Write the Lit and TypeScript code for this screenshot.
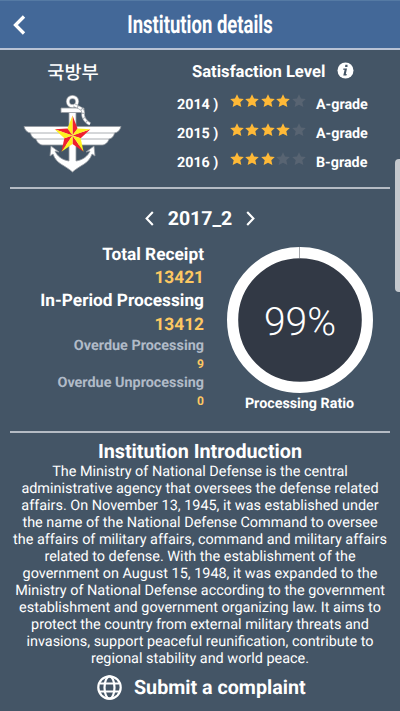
import { LitElement, html, svg, css } from "lit";
import { customElement, property } from "lit/decorators.js";

const STAR = "M8 .3l2.3 4.9 5.500.600-4 3.700 1.200 5.400L8 12.200l-5 2.700 1.200-5.400-4-3.700 5.500-.600z";

@customElement("star-rating")
class StarRating extends LitElement {
  @property({ type: Number }) value = 0;

  static styles = css`
    :host { display: flex; }
    .star { width: 14px; height: 13.5px; margin: 0 .75px; display: block; fill: #586472; }
    .on { fill: #ffb937; }
  `;

  render() {
    return [1, 2, 3, 4, 5].map(
      (n) => html`<svg class="star ${n <= this.value ? "on" : ""}" viewBox="0 0 16 15.5"><path d=${STAR} /></svg>`
    );
  }
}

@customElement("ministry-emblem")
class MinistryEmblem extends LitElement {
  static styles = css`
    :host { display: block; }
    .art { display: block; width: 100px; height: 80px; }
  `;

  render() {
    const outer: number[][] = [];
    const inner: number[][] = [];
    for (let i = 0; i < 5; i++) {
      const a = ((-90 + i * 72) * Math.PI) / 180;
      const b = a + Math.PI / 5;
      outer.push([49.5 + 18.8 * Math.cos(a), 40.5 + 20 * Math.sin(a)]);
      inner.push([49.5 + 8.6 * Math.cos(b), 40.5 + 8.6 * Math.sin(b)]);
    }
    const tri = (p: number[], q: number[], fill: string) =>
      svg`<polygon points="49.5,40.5 ${p.join(",")} ${q.join(",")}" fill=${fill} />`;
    return html`<svg class="art" viewBox="0 0 100 80">
      <g stroke="#94999f" stroke-width=".8" stroke-linejoin="round">
        <path fill="#fff" d="M1 31.500H98C97 35 95 37.500 91.500 38C91 41 89 43.500 86 44C85 47.500 82 50 79 50H20C17 50 14 47.500 13 44C10 43.500 8 41 7.500 38C4 37.500 2 35 1 31.500Z" />
        <path fill="none" d="M7 38H92M13 44H86" />
        <path fill="#fff" d="M46 17H53V66C60 65 65 61 67 56L63 57L71 51L72 61L69 59C66 69 57 70 49.500 77C42 70 33 69 30 59L27 61L28 51L36 57L32 56C34 61 39 65 46 66Z" />
        <path fill="#fff" d="M38 13H61V17.500H38Z" />
      </g>
      <circle cx="49.500" cy="6.500" r="4.600" fill="none" stroke="#989da3" stroke-width="4" />
      <circle cx="49.500" cy="6.500" r="4.600" fill="none" stroke="#fff" stroke-width="2.500" />
      <path d="M51 10L57 13Q61 15 60 20Q61 26 67 29" fill="none" stroke="#a4a9af" stroke-width="3.600" />
      <path d="M51 10L57 13Q61 15 60 20Q61 26 67 29" fill="none" stroke="#fff" stroke-width="2" stroke-dasharray="3.600 1" />
      ${outer.map((p, i) => [tri(p, inner[i], "#f0202f"), tri(p, inner[(i + 4) % 5], "#fff11c")])}
    </svg>`;
  }
}

@customElement("app-root")
class AppRoot extends LitElement {
  static styles = css`
    :host {
      display: block; position: relative; box-sizing: border-box;
      width: 400px; height: 711px; overflow: hidden;
      background: #445566; color: #fff; text-rendering: geometricPrecision;
      font-family: Roboto, "Noto Sans CJK KR", sans-serif; font-weight: 700;
    }
    svg { display: block; }
    .bar {
      display: grid; grid-template-columns: 100px 200px 100px; align-items: center;
      height: 48px; background: #436898; border-bottom: 2px solid #b9c3d5;
      box-shadow: inset 0 1px #557aa4;
    }
    .back { margin-left: 12px; }
    .title { font-size: 25px; line-height: 48px; padding-top: 2px; text-align: center; white-space: nowrap; transform: scaleX(.74); }
    .top { display: flex; height: 137px; }
    .org { width: 146px; display: flex; flex-direction: column; align-items: center; }
    .name { font-size: 18.7px; line-height: 26px; margin-top: 10px; font-weight: 500; white-space: nowrap; }
    .emblem { margin-top: 9px; }
    .sat { padding-left: 31px; }
    .sathead { display: flex; align-items: center; height: 22px; margin: 11px 0 8px 15px; font-size: 16.6px; }
    .info { margin: -3px 0 0 12px; }
    .grade { display: grid; grid-template-columns: 52px 87px auto; height: 29px; line-height: 29px; font-size: 14.3px; }
    .stars { padding-top: 3px; }
    .rule { height: 2px; margin: 0 10px; background: #b5bbc4; }
    .period { display: flex; justify-content: center; align-items: center; height: 58px; font-size: 19.5px; gap: 14px; }
    .stats { display: grid; grid-template-columns: 204px 191px; height: 184px; }
    .list { text-align: right; white-space: nowrap; margin-top: -3px; }
    .label, .num { font-size: 17.3px; line-height: 23.2px; }
    .num { color: #fdc862; }
    .minor { font-size: 14.4px; line-height: 18px; color: #b1bbc8; }
    .small { font-size: 12px; line-height: 19px; color: #fdc862; }
    .ratio { display: flex; flex-direction: column; align-items: center; }
    .pct { font-size: 39px; font-weight: 300; }
    .cap { font-size: 14.3px; line-height: 20px; }
    .heading { font-size: 19.8px; line-height: 24px; margin-top: 7px; text-align: center; }
    .intro { font-size: 14.43px; line-height: 17px; font-weight: 400; text-align: center; white-space: nowrap; margin-top: -1px; }
    .send { display: flex; align-items: center; height: 26px; margin: 7px 0 0 97px; gap: 12px; font-size: 19.7px; white-space: nowrap; }
    .thumb { position: absolute; left: 395px; top: 159px; width: 8px; height: 133px; border-radius: 5px; background: #c5c9ce; }
  `;

  render() {
    const grades: [string, number, string][] = [["2014 )", 4, "A-grade"], ["2015 )", 4, "A-grade"], ["2016 )", 3, "B-grade"]];
    const lines = [
      "The Ministry of National Defense is the central",
      "administrative agency that oversees the defense related",
      "affairs. On November 13, 1945, it was established under",
      "the name of the National Defense Command to oversee",
      "the affairs of military affairs, command and military affairs",
      "related to defense. With the establishment of the",
      "government on August 15, 1948, it was expanded to the",
      "Ministry of National Defense according to the government",
      "establishment and government organizing law. It aims to",
      "protect the country from external military threats and",
      "invasions, support peaceful reunification, contribute to",
      "regional stability and world peace.",
    ];
    return html`
      <header class="bar">
        <svg class="back" width="14" height="20" viewBox="0 0 14 20"><path d="M12 1.500L3.500 10L12 18.500" fill="none" stroke="#fff" stroke-width="3.300" /></svg>
        <div class="title">Institution details</div>
      </header>
      <section class="top">
        <div class="org">
          <div class="name">국방부</div>
          <ministry-emblem class="emblem"></ministry-emblem>
        </div>
        <div class="sat">
          <div class="sathead">Satisfaction Level
            <svg class="info" width="17" height="17" viewBox="0 0 17 17">
              <circle cx="8.500" cy="8.500" r="8" fill="#fff" />
              <path d="M8.300 2.800h2.200v2.200H8.100zM6.400 6.500h3.600l-1.200 5.500h1l-.4 1.500H6.300l1.300-5.800H6.100z" fill="#445566" />
            </svg>
          </div>
          ${grades.map(([y, v, g]) => html`<div class="grade"><span>${y}</span><star-rating class="stars" .value=${v}></star-rating><span>${g}</span></div>`)}
        </div>
      </section>
      <div class="rule"></div>
      <div class="period">
        <svg width="9" height="15" viewBox="0 0 9 15"><path d="M7.800 1L1.600 7.500L7.800 14" fill="none" stroke="#fff" stroke-width="2.100" /></svg>
        <span>2017_2</span>
        <svg width="9" height="15" viewBox="0 0 9 15"><path d="M1.200 1L7.400 7.500L1.200 14" fill="none" stroke="#fff" stroke-width="2.100" /></svg>
      </div>
      <section class="stats">
        <div class="list">
          <div class="label">Total Receipt</div><div class="num">13421</div>
          <div class="label">In-Period Processing</div><div class="num">13412</div>
          <div class="minor">Overdue Processing</div><div class="small">9</div>
          <div class="minor">Overdue Unprocessing</div><div class="small">0</div>
        </div>
        <div class="ratio">
          <svg width="146" height="147" viewBox="0 0 146 147">
            <circle cx="73" cy="73" r="67.400" fill="#323945" stroke="#fff" stroke-width="11.200" />
            <path d="M72.500 0V11" stroke="#a5a8ac" stroke-width="1" />
            <text class="pct" x="73" y="88" text-anchor="middle" fill="#fff">99%</text>
          </svg>
          <div class="cap">Processing Ratio</div>
        </div>
      </section>
      <div class="rule"></div>
      <div class="heading">Institution Introduction</div>
      <div class="intro">${lines.map((l) => html`<div>${l}</div>`)}</div>
      <div class="send">
        <svg width="25" height="25" viewBox="0 0 25 25" fill="none" stroke="#fff" stroke-width="2.200">
          <circle cx="12.500" cy="12.500" r="11.200" /><ellipse cx="12.500" cy="12.500" rx="5" ry="11.200" /><path d="M2.500 8.500H22.500M2.500 16.500H22.500" />
        </svg>
        <span>Submit a complaint</span>
      </div>
      <div class="thumb"></div>
    `;
  }
}
